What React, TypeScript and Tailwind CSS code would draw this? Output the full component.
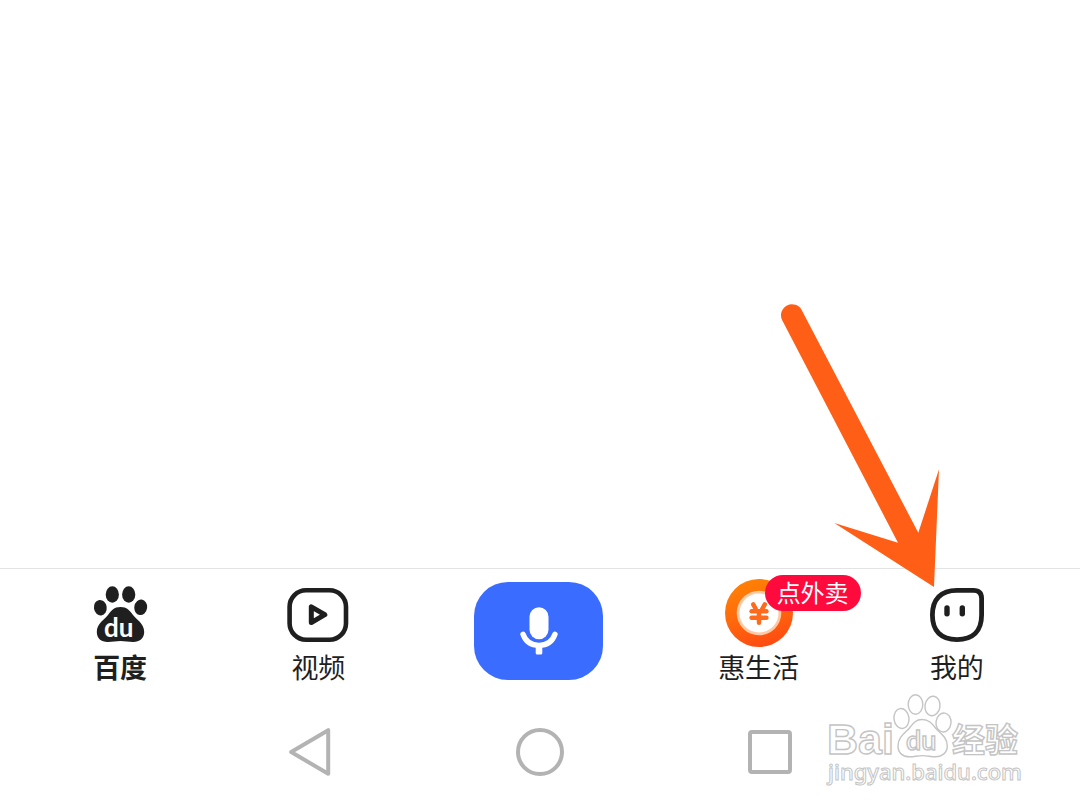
import React from "react";

function PawIcon() {
  return (
    <svg width="56" height="60" viewBox="0 0 56 60" fill="#1f1f1f" aria-hidden="true">
      <ellipse cx="8.3" cy="22.7" rx="6.4" ry="7.8" transform="rotate(-8 8.3 22.7)" />
      <ellipse cx="20.3" cy="9.5" rx="6.6" ry="8.3" />
      <ellipse cx="36.7" cy="9.5" rx="6.6" ry="8.3" />
      <ellipse cx="48.7" cy="22.3" rx="6.4" ry="7.8" transform="rotate(8 48.7 22.3)" />
      <path d="M28.5 22C35 22 37.5 25.5 41 30C44 34 52.2 38.5 52.2 47C52.2 53.5 47 57.2 41 57C36.5 56.8 33 56 28.5 56C24 56 20.5 56.8 16 57C9.5 57.2 4.8 53.5 4.8 47C4.8 38.5 13 34 16 30C19.5 25.5 22 22 28.5 22Z" />
      <text x="12" y="52" fontSize="26" fill="#fff" className="font-['Lato',sans-serif] font-bold">du</text>
    </svg>
  );
}

function VideoIcon() {
  return (
    <svg width="62" height="54" viewBox="0 0 62 54" fill="none" stroke="#1f1f1f" aria-hidden="true">
      <rect x="2.6" y="2.3" width="56.4" height="49.4" rx="16.5" strokeWidth="4.6" />
      <path d="M24.3 18.8V34.6L37.8 26.7Z" strokeWidth="5" strokeLinejoin="round" />
    </svg>
  );
}

function MicIcon() {
  return (
    <svg width="38" height="48" viewBox="0 0 38 48" fill="none" aria-hidden="true">
      <rect x="9.5" y="0.3" width="19" height="32" rx="9.5" fill="#fff" />
      <path d="M3 27.2C5.4 34.2 11 38.4 19 38.4C27 38.4 32.6 34.2 35 27.2" stroke="#fff" strokeWidth="5.4" strokeLinecap="round" />
      <rect x="15.7" y="38" width="6.6" height="9.6" rx="1.5" fill="#fff" />
    </svg>
  );
}

function CoinIcon() {
  return (
    <svg width="68" height="72" viewBox="0 0 68 72" fill="none" aria-hidden="true">
      <defs>
        <linearGradient id="coin" x1="0.3" y1="0" x2="0.6" y2="1">
          <stop offset="0" stopColor="#ff8205" />
          <stop offset="0.5" stopColor="#ff6a0c" />
          <stop offset="1" stopColor="#ff4a12" />
        </linearGradient>
      </defs>
      <circle cx="34" cy="34" r="34" fill="url(#coin)" />
      <circle cx="34" cy="34" r="22.3" fill="#ffc9a3" />
      <circle cx="34" cy="34" r="19.5" fill="#fff" />
      <g stroke="#ff6b1c" strokeWidth="4.5" strokeLinecap="round">
        <path d="M28.2 25.4L30.8 30" />
        <path d="M39.8 25.4L37.2 30" />
        <path d="M26.6 32.2H41.4" />
        <path d="M26.6 38.8H41.4" />
        <path d="M34 32.2V43.8" />
      </g>
    </svg>
  );
}

function FaceIcon() {
  return (
    <svg width="54" height="54" viewBox="0 0 54 54" fill="none" aria-hidden="true">
      <path
        d="M27 2.4H43.5Q51.6 2.4 51.6 10.5V27C51.6 43 43 51.6 27 51.6C11 51.6 2.4 43 2.4 27C2.4 11 11 2.4 27 2.4Z"
        stroke="#1f1f1f"
        strokeWidth="4.8"
      />
      <rect x="14.3" y="17.2" width="5.4" height="11.2" rx="2.7" fill="#1f1f1f" />
      <rect x="29.6" y="17.2" width="5.4" height="11.2" rx="2.7" fill="#1f1f1f" />
    </svg>
  );
}

function Arrow() {
  return (
    <svg
      width="160"
      height="285"
      viewBox="0 0 160 285"
      className="pointer-events-none absolute right-[44px] bottom-full z-10 max-w-none"
      aria-hidden="true"
    >
      <path d="M2.2 17.2A10.8 10.8 0 0 1 21.8 7.2L138.3 229.7L159 166.3L154 284L54.3 220L118 239.7Z" fill="#ff5e17" />
    </svg>
  );
}

function Watermark() {
  return (
    <svg
      width="200"
      height="98"
      viewBox="0 0 200 98"
      className="pointer-events-none absolute right-[54px] bottom-5"
      fill="#fff"
      stroke="#c4c4c4"
      strokeWidth="1.4"
      role="img"
      aria-label="Baidu 经验"
    >
      <text x="1" y="62" fontSize="43" className="font-['Liberation_Sans',sans-serif] font-bold">Bai</text>
      <ellipse cx="75.5" cy="26.5" rx="7.5" ry="10" transform="rotate(-8 75.5 26.5)" />
      <ellipse cx="89.5" cy="12.5" rx="7.3" ry="9.8" />
      <ellipse cx="106.5" cy="14" rx="7.5" ry="9.8" transform="rotate(8 106.5 14)" />
      <ellipse cx="117.5" cy="30.5" rx="7.5" ry="9.5" transform="rotate(8 117.5 30.5)" />
      <path d="M96 27.5C103 27.5 106 31.5 109.5 36C113 40.5 121.3 44.5 121.3 54C121.3 61 115.5 65 109 64.8C104.5 64.6 101 63.6 96.5 63.6C92 63.6 88.5 64.6 84 64.8C77 65 72 61 72 54C72 44.5 80 40.5 83.5 36C87 31.5 89.5 27.5 96 27.5Z" />
      <text x="80" y="58" fontSize="27" className="font-['Lato',sans-serif] font-semibold">du</text>
      <text x="126" y="60" fontSize="33" className="font-['Noto_Sans_CJK_SC',sans-serif] font-bold">经验</text>
      <text x="2" y="88" fontSize="22" strokeWidth="1" className="font-['Noto_Sans',sans-serif] font-medium">jingyan.baidu.com</text>
    </svg>
  );
}

type TabProps = {
  label: string;
  active?: boolean;
  children: React.ReactNode;
};

function Tab({ label, active, children }: TabProps) {
  return (
    <button type="button" className="flex flex-col items-center text-[#1f1f1f]">
      <span className="flex h-[72px] items-center">{children}</span>
      <span className={active ? "text-[27px] leading-8 font-bold" : "text-[27px] leading-8"}>{label}</span>
    </button>
  );
}

export default function App() {
  return (
    <div className="flex min-h-screen flex-col overflow-hidden bg-white font-['Noto_Sans_CJK_SC',sans-serif]">
      <main className="flex-1" />

      <nav className="grid grid-cols-[1fr_1fr_242px_1fr_1fr] border-t border-[#e3e3e3] pt-[10px] pr-6 pb-[2px] pl-[21px]">
        <Tab label="百度" active>
          <PawIcon />
        </Tab>
        <Tab label="视频">
          <VideoIcon />
        </Tab>
        <div className="flex items-start justify-center pt-[3px]">
          <button
            type="button"
            aria-label="语音"
            className="flex h-[98px] w-[129px] items-center justify-center rounded-[34px] bg-[#3a6dff]"
          >
            <MicIcon />
          </button>
        </div>
        <Tab label="惠生活">
          <span className="relative">
            <CoinIcon />
            <span className="absolute -top-1 left-10 h-9 w-24 rounded-full bg-[#ff0a3c] text-center text-2xl leading-[34px] text-white">
              点外卖
            </span>
          </span>
        </Tab>
        <Tab label="我的">
          <span className="relative">
            <FaceIcon />
            <Arrow />
          </span>
        </Tab>
      </nav>

      <footer className="relative pt-[43px] pb-[34px]">
        <div className="mx-auto grid w-[64%] grid-cols-3">
          <button type="button" aria-label="返回" className="flex h-12 items-center justify-center">
            <svg width="42" height="48" viewBox="0 0 42 48" fill="none" stroke="#b3b3b3" strokeWidth="4" strokeLinejoin="round">
              <path d="M39.2 2.2V45.8L2.2 24Z" />
            </svg>
          </button>
          <button type="button" aria-label="主屏幕" className="flex h-12 items-center justify-center">
            <span className="size-12 rounded-full border-4 border-[#b3b3b3]" />
          </button>
          <button type="button" aria-label="最近任务" className="flex h-12 items-center justify-center">
            <span className="size-11 rounded-sm border-4 border-[#b3b3b3]" />
          </button>
        </div>
        <Watermark />
      </footer>
    </div>
  );
}
